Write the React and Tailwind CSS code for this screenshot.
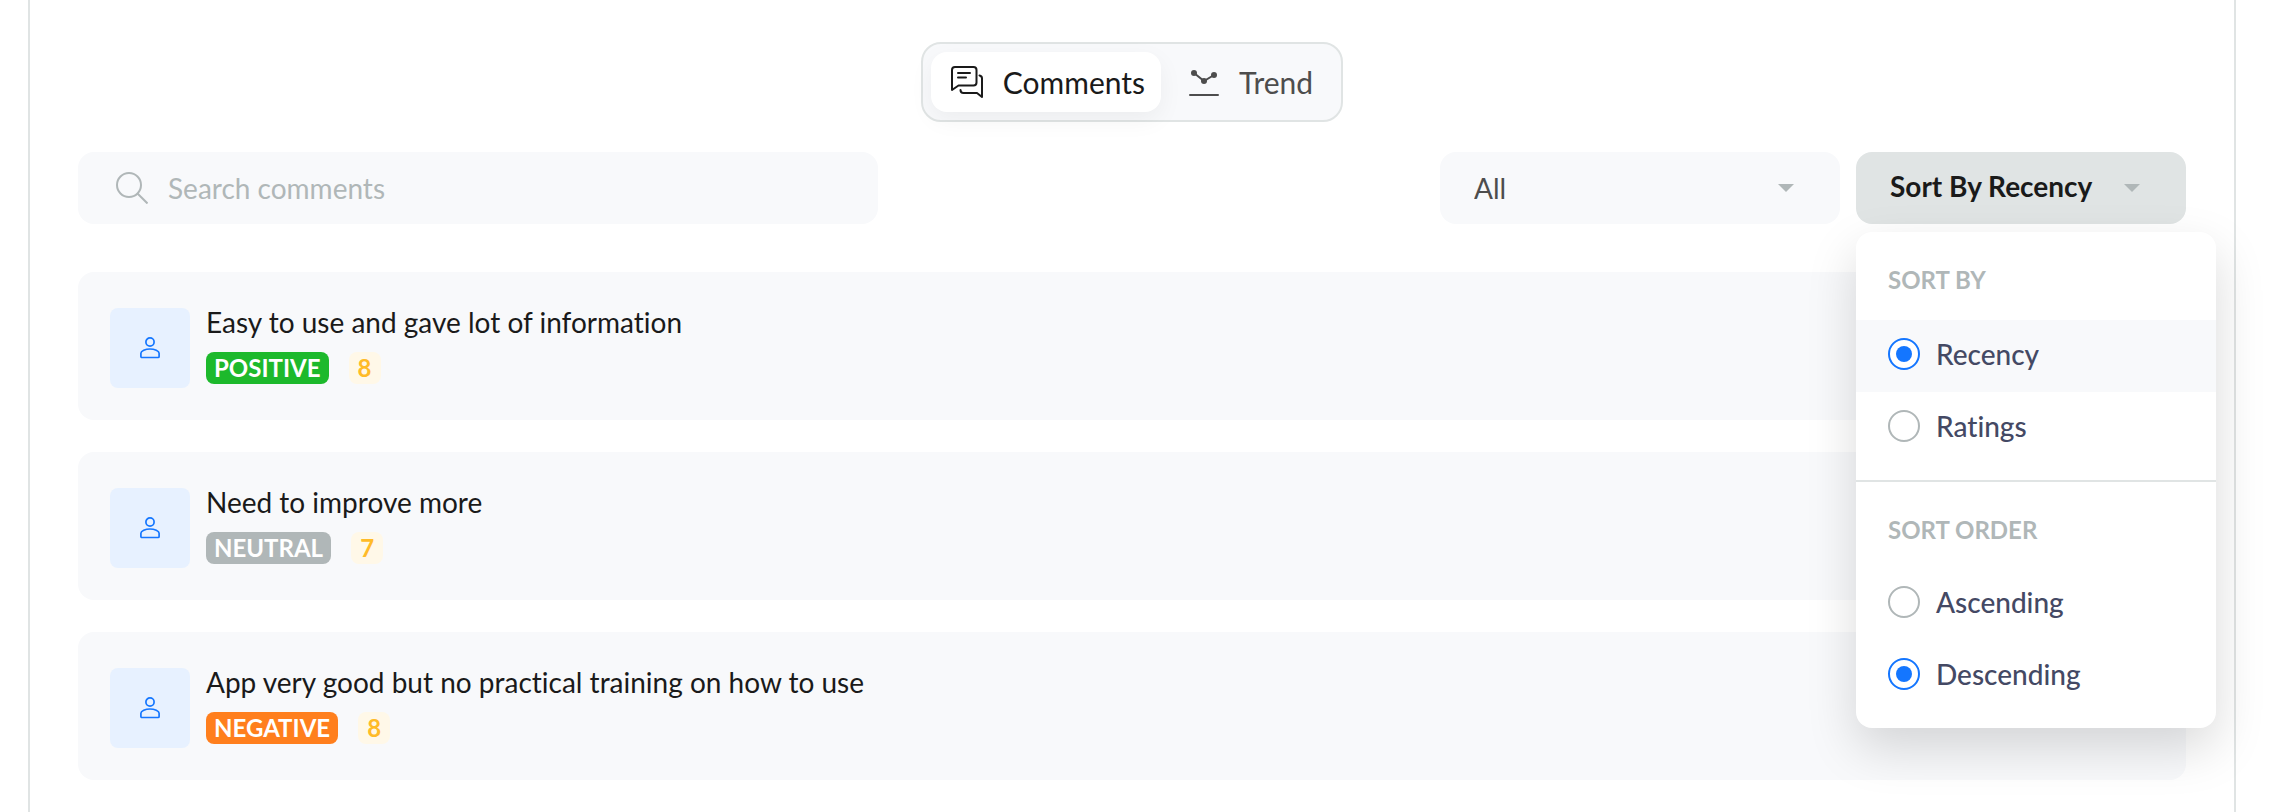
import { useState } from "react";

const comments = [
  { id: 1, text: "Easy to use and gave lot of information", sentiment: "POSITIVE", rating: 8 },
  { id: 2, text: "Need to improve more", sentiment: "NEUTRAL", rating: 7 },
  { id: 3, text: "App very good but no practical training on how to use", sentiment: "NEGATIVE", rating: 8 },
];

const sentimentClass = {
  POSITIVE: "bg-[#1db92c]",
  NEUTRAL: "bg-[#b0b7b8]",
  NEGATIVE: "bg-[#ff7f1d]",
};

function CommentsIcon() {
  return (
    <svg width="32" height="32" viewBox="0 0 32 32" fill="none" stroke="currentColor" strokeWidth="2" strokeLinejoin="round" strokeLinecap="round" aria-hidden="true">
      <path d="M1 24V4a3 3 0 0 1 3-3h18.500a3 3 0 0 1 3 3v12.500a3 3 0 0 1-3 3H7.500z" />
      <path d="M7 7h12M7 11.500h8" />
      <path d="M28.500 9.500a3 3 0 0 1 2.500 3V31l-5-4H12.500a3 3 0 0 1-3-3" />
    </svg>
  );
}

function TrendIcon() {
  return (
    <svg width="30" height="32" viewBox="0 0 30 32" fill="none" stroke="currentColor" strokeWidth="2" strokeLinecap="round" aria-hidden="true">
      <path d="M5 7l10 8 10-6M1 29h28" />
      <circle cx="5" cy="7" r="3" fill="currentColor" stroke="none" />
      <circle cx="15" cy="15" r="3" fill="currentColor" stroke="none" />
      <circle cx="25" cy="9" r="3" fill="currentColor" stroke="none" />
    </svg>
  );
}

function SearchIcon() {
  return (
    <svg width="32" height="32" viewBox="0 0 32 32" fill="none" stroke="currentColor" strokeWidth="2" aria-hidden="true">
      <circle cx="13" cy="13" r="12" />
      <path d="M21.500 21.500L31.500 31.500" />
    </svg>
  );
}

function UserIcon() {
  return (
    <svg width="20" height="22" viewBox="0 0 20 22" fill="none" stroke="currentColor" strokeWidth="1.700" strokeLinejoin="round" aria-hidden="true">
      <circle cx="10" cy="5" r="4.100" />
      <path d="M.9 16.300C.9 14 5.500 12 10 12s9.100 2 9.100 4.300v3.200a1 1 0 0 1-1 1H1.900a1 1 0 0 1-1-1z" />
    </svg>
  );
}

function Caret({ className = "" }) {
  return (
    <svg width="16" height="8" viewBox="0 0 16 8" fill="#b0b7b8" className={className} aria-hidden="true">
      <path d="M0 0h16L8 8z" />
    </svg>
  );
}

function RadioRow({ name, label, checked, onChange, active }) {
  return (
    <label className={`flex h-18 cursor-pointer items-center gap-4 px-8 pb-1 font-medium text-[#444964] ${active ? "bg-[#f8f9fb]" : ""}`}>
      <input
        type="radio"
        name={name}
        checked={checked}
        onChange={onChange}
        className="grid size-8 shrink-0 cursor-pointer appearance-none place-content-center rounded-full border-2 border-[#b0b7b8] bg-white checked:border-[#1476ff] checked:before:size-4 checked:before:rounded-full checked:before:bg-[#1476ff]"
      />
      {label}
    </label>
  );
}

function SortMenu({ sortBy, setSortBy, order, setOrder }) {
  return (
    <div className="absolute top-full left-0 z-10 mt-2 w-[360px] overflow-hidden rounded-2xl bg-white shadow-[0_20px_50px_rgba(0,0,0,0.15)]">
      <div role="radiogroup" aria-labelledby="sort-by" className="py-4">
        <p id="sort-by" className="mb-2 px-8 text-2xl leading-16 font-bold text-[#b0b7b8]">
          SORT BY
        </p>
        {["Recency", "Ratings"].map((item) => (
          <RadioRow key={item} name="sortBy" label={item} checked={sortBy === item} active={sortBy === item} onChange={() => setSortBy(item)} />
        ))}
      </div>
      <div role="radiogroup" aria-labelledby="sort-order" className="border-t-2 border-[#e0e4e4] py-4">
        <p id="sort-order" className="mb-1.5 px-8 text-2xl leading-16 font-bold text-[#b0b7b8]">
          SORT ORDER
        </p>
        {["Ascending", "Descending"].map((item) => (
          <RadioRow key={item} name="order" label={item} checked={order === item} onChange={() => setOrder(item)} />
        ))}
      </div>
    </div>
  );
}

function CommentCard({ comment }) {
  return (
    <li className="flex items-start gap-4 rounded-2xl bg-[#f8f9fb] p-8">
      <div className="mt-1 grid size-20 shrink-0 place-items-center rounded-lg bg-[#e7f1ff] text-[#1476ff]">
        <UserIcon />
      </div>
      <div>
        <p className="leading-9 text-[#1a1a1a]">{comment.text}</p>
        <div className="mt-3 flex gap-5 text-2xl leading-8 font-bold">
          <span className={`rounded-lg px-2 text-white ${sentimentClass[comment.sentiment]}`}>{comment.sentiment}</span>
          <span className="w-8 rounded-lg bg-[#fff8e8] text-center text-[#ffbb28]">{comment.rating}</span>
        </div>
      </div>
    </li>
  );
}

export default function App() {
  const [tab, setTab] = useState("comments");
  const [open, setOpen] = useState(true);
  const [sortBy, setSortBy] = useState("Recency");
  const [order, setOrder] = useState("Descending");

  const tabClass = (name) =>
    `flex h-15 cursor-pointer items-center gap-5 rounded-2xl text-3xl ${
      tab === name ? "bg-white pr-4 pl-5 text-[#1a1a1a] shadow-[0_8px_24px_rgba(0,0,0,0.05)]" : "pr-5 pl-7 text-[#4d4d4d]"
    }`;

  return (
    <div className="min-h-screen overflow-x-hidden bg-white pr-[38px] pl-7 font-['Lato',sans-serif] text-[28px] [font-variant-ligatures:none]">
      <main className="border-x-2 border-[#e0e4e4] px-12 pt-[42px] pb-8">
        <div className="flex justify-center">
          <div className="flex rounded-[20px] border-2 border-[#e0e4e4] bg-[#f8f9fb] p-2">
            <button type="button" className={tabClass("comments")} onClick={() => setTab("comments")}>
              <CommentsIcon />
              Comments
            </button>
            <button type="button" className={tabClass("trend")} onClick={() => setTab("trend")}>
              <TrendIcon />
              Trend
            </button>
          </div>
        </div>

        <div className="mt-[30px] flex gap-4">
          <label className="mr-auto flex h-18 w-[800px] items-center gap-5 rounded-2xl bg-[#f8f9fb] px-[38px] text-[#b0b7b8]">
            <SearchIcon />
            <input
              type="text"
              aria-label="Search comments"
              placeholder="Search comments"
              className="min-w-0 flex-1 bg-transparent text-[#1a1a1a] outline-none placeholder:text-[#b0b7b8]"
            />
          </label>

          <div className="relative w-[400px]">
            <select aria-label="Filter comments" className="h-18 w-full cursor-pointer appearance-none rounded-2xl bg-[#f8f9fb] px-[34px] text-[#4d4d4d]">
              <option>All</option>
            </select>
            <Caret className="pointer-events-none absolute top-8 right-[46px]" />
          </div>

          <div className="relative w-[330px]">
            <button
              type="button"
              aria-expanded={open}
              onClick={() => setOpen(!open)}
              className="flex h-18 w-full cursor-pointer items-center justify-between rounded-2xl bg-[#e0e4e4] pr-[46px] pl-[34px] font-bold text-[#1a1a1a]"
            >
              <span className="pb-1">Sort By {sortBy}</span>
              <Caret />
            </button>
            {open && <SortMenu sortBy={sortBy} setSortBy={setSortBy} order={order} setOrder={setOrder} />}
          </div>
        </div>

        <ul className="mt-12 flex flex-col gap-8">
          {comments.map((comment) => (
            <CommentCard key={comment.id} comment={comment} />
          ))}
        </ul>
      </main>
    </div>
  );
}
